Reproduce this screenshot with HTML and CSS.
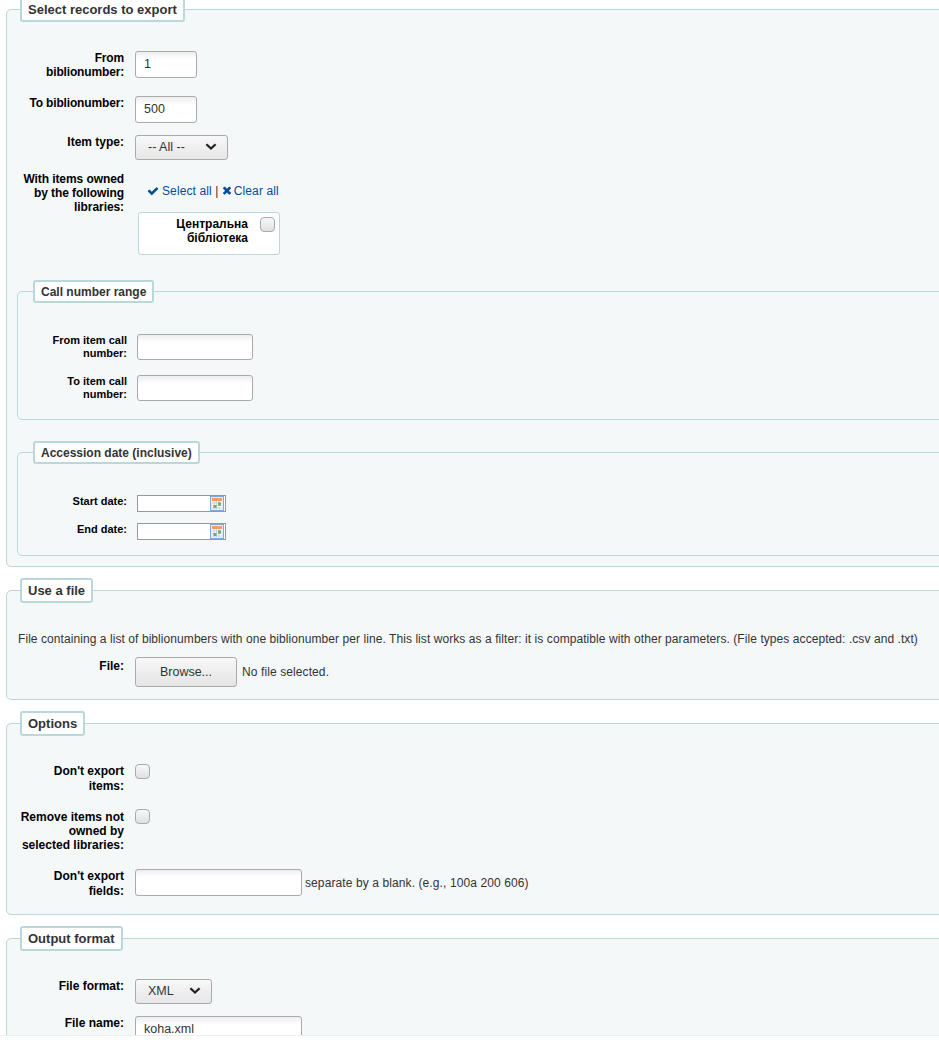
FILE: index.html
```html
<!DOCTYPE html>
<html lang="en">
<head>
<meta charset="utf-8">
<title>Export data</title>
<link rel="stylesheet" href="styles.css">
</head>
<body>
<svg class="defs" aria-hidden="true">
  <symbol id="chev" viewBox="0 0 12 8"><path d="M1.4 1.2 6 5.6l4.6-4.400" fill="none" stroke="#222" stroke-width="2.200"/></symbol>
  <symbol id="cal" viewBox="0 0 14 15">
    <rect x=".5" y=".5" width="13" height="14" fill="#e4edf8" stroke="#7fa9dc"/>
    <rect x="2" y="2" width="10" height="3" fill="#f79a5a"/>
    <rect x="2" y="5" width="10" height="8" fill="#fff"/>
    <path d="M2 7h10M2 9.500h10M2 12h10M4 5v8M6.500 5v8M9 5v8" stroke="#b4c8e6" stroke-width=".8"/>
    <rect x="3.500" y="9" width="3" height="3" fill="#6fae6a"/>
    <rect x="8" y="6.500" width="3" height="3" fill="#6fae6a"/>
  </symbol>
</svg>
<div class="viewport">
  <form class="page">
    <fieldset class="set set-first">
      <legend>Select records to export</legend>
      <div class="rows">
        <div class="row row-tall"><label class="tight">From biblionumber:</label><input class="text short" value="1"></div>
        <div class="row"><label class="tight">To biblionumber:</label><input class="text short" value="500"></div>
        <div class="row"><label>Item type:</label><span class="selectwrap"><select class="pick pick-all"><option>-- All --</option></select><svg class="chev"><use href="#chev"/></svg></span></div>
        <div class="row row-libs"><label class="tight-some">With items owned by the following libraries:</label>
          <div class="libs">
            <div class="links"><svg class="ico-check" viewBox="0 0 1792 1792"><path d="M1671 566q0 40-28 68l-724 724-136 136q-28 28-68 28t-68-28l-136-136-362-362q-28-28-28-68t28-68l136-136q28-28 68-28t68 28l294 295 656-657q28-28 68-28t68 28l136 136q28 28 28 68z"/></svg><a href="#">Select all</a> <span class="sep">|</span> <svg class="ico-times" viewBox="0 0 1408 1792"><path d="M1298 1202q0 40-28 68l-136 136q-28 28-68 28t-68-28l-294-294-294 294q-28 28-68 28t-68-28l-136-136q-28-28-28-68t28-68l294-294-294-294q-28-28-28-68t28-68l136-136q28-28 68-28t68 28l294 294 294-294q28-28 68-28t68 28l136 136q28 28 28 68t-28 68l-294 294 294 294q28 28 28 68z"/></svg><a href="#">Clear all</a></div>
            <div class="libbox"><span class="libname">Центральна бібліотека</span><input type="checkbox" class="check"></div>
          </div>
        </div>
      </div>
      <fieldset class="set nested nested-call">
        <legend>Call number range</legend>
        <div class="rows">
          <div class="row row-n"><label>From item call number:</label><input class="text call"></div>
          <div class="row row-n"><label>To item call number:</label><input class="text call"></div>
        </div>
      </fieldset>
      <fieldset class="set nested nested-date">
        <legend>Accession date (inclusive)</legend>
        <div class="rows">
          <div class="row row-d"><label>Start date:</label><span class="datebox"><input class="date"><svg class="cal"><use href="#cal"/></svg></span></div>
          <div class="row row-d"><label>End date:</label><span class="datebox"><input class="date"><svg class="cal"><use href="#cal"/></svg></span></div>
        </div>
      </fieldset>
    </fieldset>

    <fieldset class="set">
      <legend>Use a file</legend>
      <div class="rows rows-file">
        <p class="hint">File containing a list of biblionumbers with one biblionumber per line. This list works as a filter: it is compatible with other parameters. (File types accepted: .csv and .txt)</p>
        <div class="row row-file"><label>File:</label><button type="button" class="browse">Browse...</button><span class="nofile">No file selected.</span></div>
      </div>
    </fieldset>

    <fieldset class="set">
      <legend>Options</legend>
      <div class="rows rows-low">
        <div class="row row-opt"><label>Don't export items:</label><input type="checkbox" class="check"></div>
        <div class="row row-opt2"><label>Remove items not owned by selected libraries:</label><input type="checkbox" class="check"></div>
        <div class="row row-last"><label>Don't export fields:</label><input class="text wide"><span class="note">separate by a blank. (e.g., 100a 200 606)</span></div>
      </div>
    </fieldset>

    <fieldset class="set">
      <legend>Output format</legend>
      <div class="rows rows-low">
        <div class="row"><label>File format:</label><span class="selectwrap"><select class="pick pick-xml"><option>XML</option></select><svg class="chev"><use href="#chev"/></svg></span></div>
        <div class="row"><label>File name:</label><input class="text wide" value="koha.xml"></div>
      </div>
    </fieldset>
  </form>
</div>
</body>
</html>
```
FILE: styles.css
```css
html, body {
  margin: 0;
  padding: 0;
  height: 1045px;
  overflow: hidden;
  background: #fff;
}
body {
  font-family: "Liberation Sans", Arial, sans-serif;
  font-size: 12px;
  line-height: 14px;
  color: #000;
}
.defs { display: none; }
.viewport {
  height: 1035px;
  overflow: hidden;
  border-bottom: 1px solid #eee;
}
.page {
  width: 975px;
  margin: -3px 0 0 6px;
}
.set {
  margin: 0 0 11px;
  padding: 0;
  min-width: 0;
  background: #f4f8f9;
  border: 1px solid #b9d8d9;
  border-radius: 5px;
}
.set > legend {
  margin-left: 13px;
  padding: 3px 6px;
  background: #fff;
  border: 2px solid #b9d8d9;
  border-radius: 3px;
  font-size: 13px;
  line-height: 15px;
  font-weight: bold;
  color: #333;
}
.rows { padding: 29px 11px 0; }
.rows-low { padding-top: 28px; }
.row { display: flex; align-items: flex-start; padding-bottom: 12px; }
.row label {
  flex: none;
  width: 106px;
  margin-right: 11px;
  text-align: right;
  font-weight: bold;
}
.row label.tight { letter-spacing: -.16px; }
.row label.tight-some { letter-spacing: -.08px; }
.row-tall { padding-bottom: 17px; }
.text {
  box-sizing: border-box;
  height: 27px;
  margin: 0;
  padding: 0 8px 2px;
  border: 1px solid #aaa;
  border-radius: 3px;
  background: linear-gradient(#eee, #fff 30%, #fff);
  font: 12.500px "Liberation Sans", Arial, sans-serif;
  color: #333;
}
.short { width: 62px; }
.wide { width: 167px; }
.selectwrap { position: relative; display: inline-block; }
.pick {
  display: block;
  appearance: none;
  -webkit-appearance: none;
  box-sizing: border-box;
  height: 25px;
  margin: 0;
  padding: 0 12px 2px;
  border: 1px solid #aaa;
  border-radius: 3px;
  background: linear-gradient(#f8f8f8, #e6e6e6);
  font: 12.500px "Liberation Sans", Arial, sans-serif;
  color: #333;
}
.pick-all { width: 93px; }
.pick-xml { width: 77px; }
.chev { position: absolute; right: 11px; top: 8px; width: 12px; height: 8px; }
.row-libs { padding-bottom: 0; }
.links { margin: 12px 0 0 12px; height: 14px; color: #333; white-space: nowrap; letter-spacing: .1px; }
.links a { color: #004d99; text-decoration: none; }
.sep { color: #333; }
.ico-check { width: 12px; height: 12px; fill: #004d99; vertical-align: -2px; margin-right: 3px; }
.ico-times { width: 10px; height: 12px; fill: #004d99; vertical-align: -2px; margin-right: 2px; }
.libbox {
  display: flex;
  justify-content: flex-end;
  box-sizing: border-box;
  width: 142px;
  height: 43px;
  margin: 14px 0 0 3px;
  padding: 4px 4px 0 0;
  background: #fff;
  border: 1px solid #b9d8d9;
  border-radius: 3px;
}
.libname {
  width: 100px;
  margin-right: 12px;
  text-align: right;
  font-weight: bold;
}
.check {
  appearance: none;
  -webkit-appearance: none;
  flex: none;
  box-sizing: border-box;
  width: 15px;
  height: 15px;
  margin: 0;
  border: 1px solid #aaa;
  border-radius: 4px;
  background: linear-gradient(#f8f8f8, #e0e0e0);
}
.nested { margin: 25px 0 0 10px; font-size: 11px; }
.nested > legend { margin-left: 15px; padding: 3px 6px 2px; font-size: 12px; line-height: 14px; }
.nested .rows { padding-left: 10px; }
.nested .row label { width: 99px; margin-right: 10px; font-size: 11px; line-height: 13px; }
.nested-call .rows { padding-top: 31px; padding-bottom: 3px; }
.row-n { padding-bottom: 15px; }
.text.call { width: 116px; height: 26px; }
.nested-date { margin-top: 21px; }
.nested-date .rows { padding-top: 31px; padding-bottom: 4px; }
.row-d { padding-bottom: 11px; }
.set-first { padding-bottom: 10px; }
.datebox { display: flex; box-sizing: border-box; width: 89px; height: 17px; padding-right: 1px; background: #fff; border: 1px solid #999; }
.date { flex: 1; min-width: 0; border: 0; padding: 0; margin: 0; background: transparent; }
.cal { flex: none; width: 14px; height: 15px; }
.hint { margin: 0 0 13px; color: #333; white-space: nowrap; letter-spacing: .07px; }
.rows-file { padding-top: 29px; }
.browse {
  box-sizing: border-box;
  width: 102px;
  height: 30px;
  margin: -2px 0 0;
  padding: 0;
  border: 1px solid #aaa;
  border-radius: 3px;
  background: linear-gradient(#f8f8f8, #e4e4e4);
  font: 12.500px "Liberation Sans", Arial, sans-serif;
  color: #333;
}
.nofile { margin: 6px 0 0 5px; color: #333; letter-spacing: .1px; }
.note { margin: 7px 0 0 3px; color: #333; letter-spacing: .1px; }
.row-opt { padding-bottom: 15px; }
.row-opt label, .row-last label { line-height: 15px; }
.row-opt2 { padding-bottom: 17px; }
.row-opt2 label { margin-top: 1px; }
.row-last { padding-bottom: 15px; }
```
